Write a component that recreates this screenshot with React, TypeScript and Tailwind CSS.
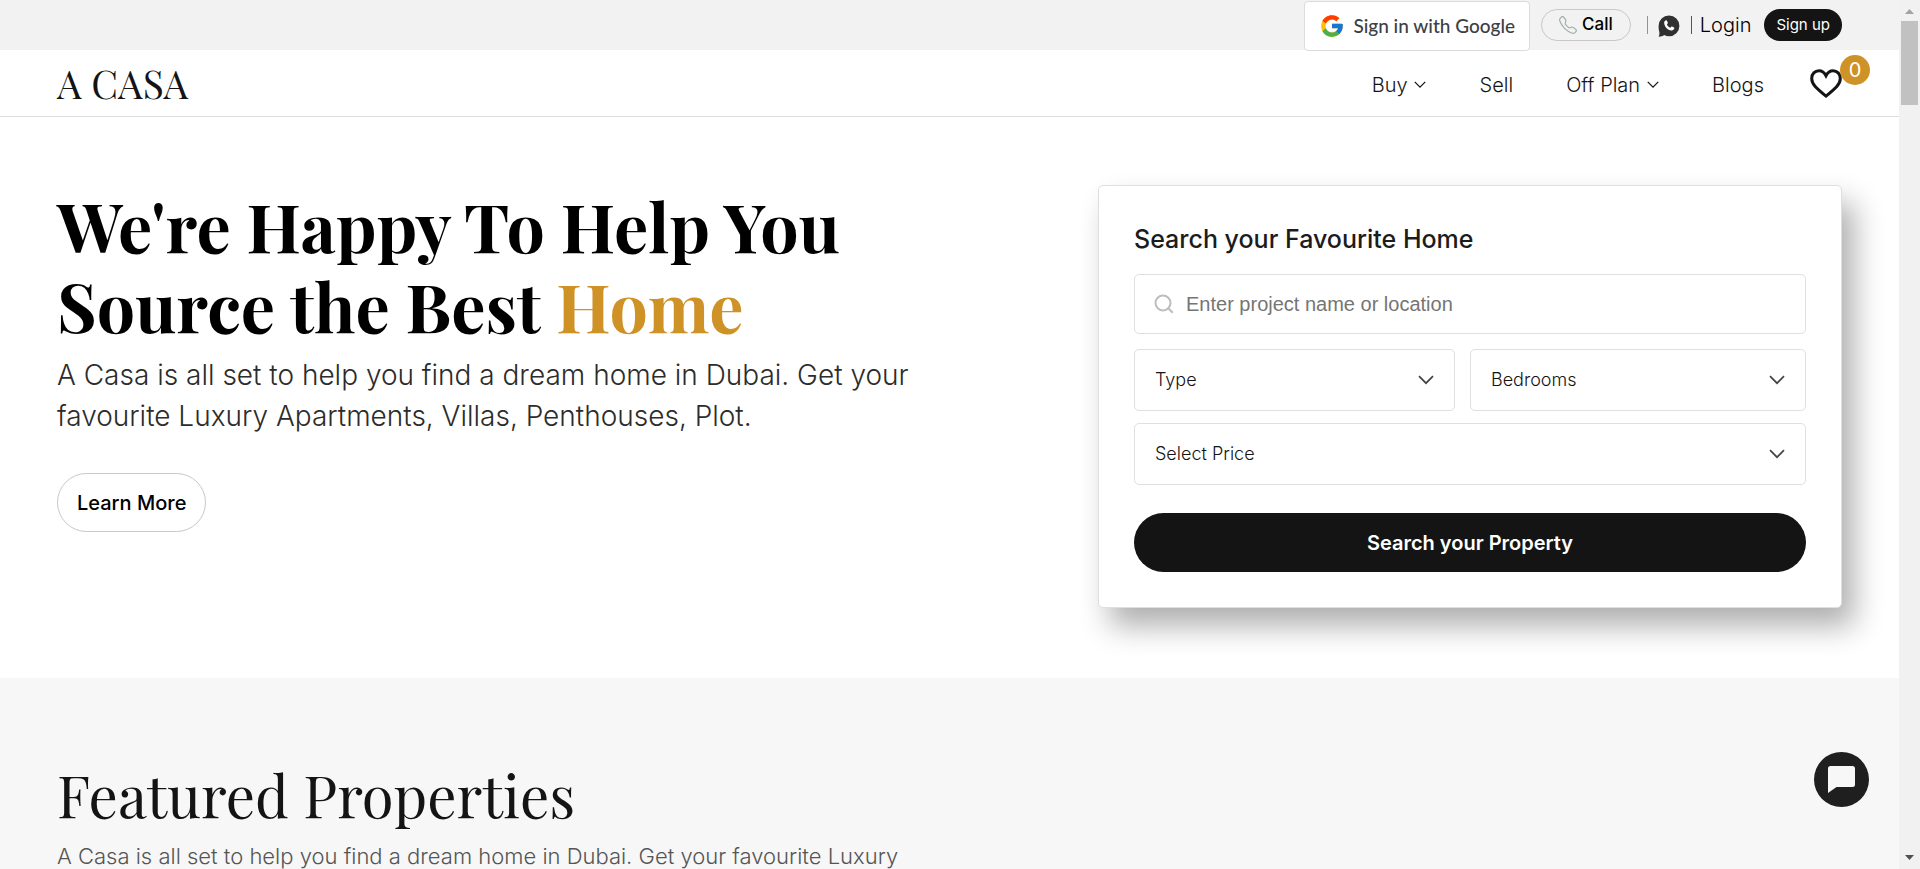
import React from "react";
import { FcGoogle } from "react-icons/fc";
import { BsTelephone } from "react-icons/bs";

function Chevron({ className }: { className: string }) {
  return (
    <svg viewBox="0 0 16 10" fill="none" stroke="currentColor" className={className} aria-hidden="true">
      <path d="M1 1.2 8 8.2l7-7" strokeWidth="1.7" />
    </svg>
  );
}

function TopBar() {
  return (
    <div className="flex h-[50px] shrink-0 items-center justify-end bg-[#f2f2f2] px-[57px]">
      <button className="mr-[11px] flex h-[50px] shrink-0 translate-y-px items-center gap-2 rounded border border-[#dadce0] bg-white px-[14px] font-['Google_Sans','Lato',sans-serif] text-[19px] font-medium text-[#3c4043]">
        <FcGoogle className="size-[26px]" />
        Sign in with Google
      </button>
      <a href="#call" className="mr-4 flex h-8 items-center gap-[5px] rounded-full border border-[#c8c8c8] px-[17px] text-[17px] font-medium">
        <BsTelephone className="size-[18px] text-[#9fb0ab]" />
        Call
      </a>
      <span className="mr-2.5 h-[18px] w-px bg-[#6f9fb5]" />
      <a href="#whatsapp" aria-label="WhatsApp" className="mr-[11px]">
        <svg viewBox="0 0 22 22" className="size-[22px] translate-y-px" aria-hidden="true">
          <path d="M11 .5A10.4 10.4 0 1 1 11 21.3C9.200 21.300 7.700 20.900 6.200 20.100 4.800 21.200 3 21.700.6 21.700 1.300 20.500 1.500 19 1.400 17.200.8 15.500.6 13.500.6 11A10.4 10.4 0 0 1 11 .5Z" fill="#303030" />
          <path d="M7.6 5.6c.5-.4 1.100-.3 1.400.3l.8 1.700c.2.4.1.700-.2 1l-.7.8c.7 1.500 1.900 2.600 3.500 3.300l.8-.9c.3-.3.6-.4 1-.2l1.700.8c.5.300.6.700.4 1.200-.5 1.300-1.600 2-2.900 1.800-3.900-.5-6.800-3.500-7.200-7.200-.1-1.100.4-2.100 1.200-2.600Z" fill="#fff" />
        </svg>
      </a>
      <span className="mr-2 h-[18px] w-px bg-[#555]" />
      <a href="#login" className="mr-[13px] text-xl font-light">Login</a>
      <button className="h-8 rounded-full bg-[#141414] px-3 text-[15px] text-white">Sign up</button>
    </div>
  );
}

function Header() {
  return (
    <header className="flex h-[67px] shrink-0 items-center justify-between border-b border-[#dedede] px-[57px]">
      <a href="#home" className="font-['Playfair_Display','Liberation_Serif',serif] text-[39px] leading-none text-[#141414]">A CASA</a>
      <nav className="flex items-center text-xl font-light text-[#141414]">
        <a href="#buy" className="mr-[54px] flex items-center gap-1.5 pt-1">Buy<Chevron className="w-3" /></a>
        <a href="#sell" className="mr-[53px] pt-1">Sell</a>
        <a href="#off-plan" className="mr-[53px] flex items-center gap-[7px] pt-1">Off Plan<Chevron className="w-3" /></a>
        <a href="#blogs" className="mr-[46px] pt-1">Blogs</a>
        <a href="#favourites" aria-label="Favourites" className="relative">
          <svg viewBox="0 0 32 29" className="w-8" fill="none" stroke="#141414" strokeWidth="3" aria-hidden="true">
            <path d="M16 6.700C14.200 3.200 11.900 1.700 9 1.700 4.800 1.700 1.700 5 1.700 9.400c0 6 5 10 14.300 17.700C25.300 19.400 30.300 15.400 30.300 9.400c0-4.400-3.100-7.700-7.300-7.700-2.900 0-5.200 1.500-7 5Z" />
          </svg>
          <span className="absolute -top-3.5 left-[30px] flex size-[30px] items-center justify-center rounded-full bg-[#cf9226] text-xl font-normal text-white">0</span>
        </a>
      </nav>
    </header>
  );
}

function SelectBox({ id, label }: { id: string; label: string }) {
  return (
    <div className="relative w-full">
      <select id={id} aria-label={label} className="h-[62px] w-full appearance-none rounded-[5px] border border-[#dfdfdf] bg-white px-5 text-lg font-light text-[#141414]">
        <option>{label}</option>
      </select>
      <Chevron className="pointer-events-none absolute top-[26px] right-[21px] w-4 text-[#444]" />
    </div>
  );
}

function SearchCard() {
  return (
    <form className="w-[744px] shrink-0 rounded-[5px] border border-[#dfdfdf] bg-white p-[35px] shadow-[12px_18px_30px_rgba(0,0,0,0.32)]">
      <h2 className="mb-[17px] text-[25px] leading-9 font-medium text-[#1c1c1c]">Search your Favourite Home</h2>
      <label className="mb-[15px] flex h-[60px] items-center gap-3 rounded-[5px] border border-[#dfdfdf] px-[19px]">
        <svg viewBox="0 0 20 20" className="size-5 shrink-0" fill="none" stroke="#bdbdbd" strokeWidth="2" aria-hidden="true">
          <circle cx="9" cy="9" r="7.500" />
          <path d="m14.500 14.500 4.300 4.300" />
        </svg>
        <input
          type="text"
          aria-label="Project name or location"
          placeholder="Enter project name or location"
          className="w-full font-['Liberation_Sans',sans-serif] text-xl outline-none placeholder:text-[#757575]"
        />
      </label>
      <div className="mb-3 grid grid-cols-[321fr_336fr] gap-[15px]">
        <SelectBox id="type" label="Type" />
        <SelectBox id="bedrooms" label="Bedrooms" />
      </div>
      <SelectBox id="price" label="Select Price" />
      <button type="button" className="mt-7 h-[59px] w-full rounded-full bg-[#141414] text-xl font-semibold text-white">
        Search your Property
      </button>
    </form>
  );
}

function Hero() {
  return (
    <section className="flex shrink-0 justify-between px-[57px] pt-[68px] pb-[70px]">
      <div>
        <h1 className="font-['Playfair_Display','Liberation_Serif',serif] text-[68px] leading-[80px] font-bold text-black">
          We're Happy To Help You
          <br />
          Source the Best <span className="text-[#cf9226]">Home</span>
        </h1>
        <p className="mt-2.5 text-[28px] leading-[41px] font-light text-[#2c2c2c]">
          A Casa is all set to help you find a dream home in Dubai. Get your
          <br />
          favourite Luxury Apartments, Villas, Penthouses, Plot.
        </p>
        <button className="mt-9 h-[59px] rounded-full border border-[#c8c8c8] px-[19px] text-xl font-medium">Learn More</button>
      </div>
      <SearchCard />
    </section>
  );
}

function Featured() {
  return (
    <section className="grow bg-[#f7f7f7] px-[57px] pt-[76px]">
      <h2 className="font-['Playfair_Display','Liberation_Serif',serif] text-[58px] leading-[80px] text-[#141414]">
        Featured Properties
      </h2>
      <p className="mt-1 text-[22px] leading-9 font-light text-[#555]">
        A Casa is all set to help you find a dream home in Dubai. Get your favourite Luxury
      </p>
    </section>
  );
}

function Scrollbar() {
  return (
    <div className="flex w-[21px] shrink-0 flex-col items-center bg-[#f1f1f1]" aria-hidden="true">
      <svg viewBox="0 0 21 21" className="size-[21px]"><path d="M6 14h9l-4.500-5Z" fill="#a3a3a3" /></svg>
      <div className="h-[84px] w-[17px] bg-[#c1c1c1]" />
      <svg viewBox="0 0 21 21" className="mt-auto size-[21px]"><path d="M6 7h9l-4.500 5Z" fill="#505050" /></svg>
    </div>
  );
}

export default function App() {
  return (
    <div className="flex h-screen overflow-hidden bg-white font-['Inter',sans-serif] text-black">
      <main className="flex min-w-0 grow flex-col overflow-hidden">
        <TopBar />
        <Header />
        <Hero />
        <Featured />
      </main>
      <Scrollbar />
      <button aria-label="Chat" className="fixed right-[51px] bottom-[62px] flex size-[55px] items-center justify-center rounded-full bg-[#1f1f1f]">
        <svg viewBox="0 0 27 27" className="size-[27px]" aria-hidden="true">
          <path d="M2.500 0h22A2.500 2.500 0 0 1 27 2.500v16a2.500 2.500 0 0 1-2.500 2.500H8.500L0 27V2.500A2.500 2.500 0 0 1 2.500 0Z" fill="#f7f7f7" />
        </svg>
      </button>
    </div>
  );
}
